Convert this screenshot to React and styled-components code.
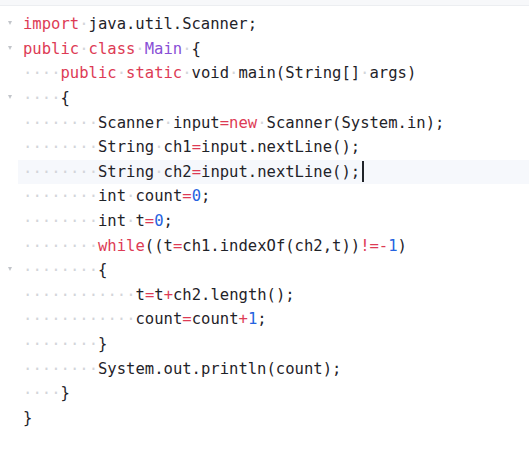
import React from "react";
import styled, { createGlobalStyle } from "styled-components";

const Global = createGlobalStyle`
  html, body { margin: 0; padding: 0; background: #ffffff; }
  body { font-family: "DejaVu Sans Mono", "Liberation Mono", monospace; }
`;

const Page = styled.div`
  width: 529px;
  height: 452px;
  background: #ffffff;
  display: flex;
  flex-direction: column;
  overflow: hidden;
`;

const TopStrip = styled.div`
  height: 5px;
  background: #f7f8fa;
  border-bottom: 1px solid #eceef1;
  flex: none;
`;

const Code = styled.div`
  padding-top: 6px;
  display: flex;
  flex-direction: column;
`;

const Row = styled.div`
  display: flex;
  height: 24.6px;
  align-items: center;
`;

const Gutter = styled.div`
  width: 18px;
  flex: none;
  height: 100%;
  display: flex;
  align-items: center;
  padding-left: 8px;
  box-sizing: border-box;
`;

const Fold = styled.span`
  width: 0;
  height: 0;
  border-left: 2.5px solid transparent;
  border-right: 2.5px solid transparent;
  border-top: 4px solid #c2c5ca;
  margin-top: -2px;
`;

const Content = styled.div`
  flex: 1;
  height: 100%;
  display: flex;
  align-items: center;
  padding-left: 5px;
  background: ${(p) => (p.$active ? "#f6f8fc" : "transparent")};
  font-size: 15.55px;
  white-space: pre;
  color: #1f2329;
  letter-spacing: 0;
`;

const colors = {
  p: "#1f2329",
  k: "#dd3b55",
  c: "#8850d6",
  n: "#2563e0",
};

const Tok = styled.span`
  color: ${(p) => colors[p.$kind]};
`;

const Ws = styled.span`
  color: #d3d5da;
`;

const Caret = styled.span`
  display: inline-block;
  width: 1.5px;
  height: 21px;
  background: #1f2329;
  margin-left: 2px;
`;

const lines = [
  { fold: true, t: [["k", "import"], ["p", " java.util.Scanner;"]] },
  { fold: true, t: [["k", "public"], ["p", " "], ["k", "class"], ["p", " "], ["c", "Main"], ["p", " {"]] },
  { t: [["p", "    "], ["k", "public"], ["p", " "], ["k", "static"], ["p", " void main(String[] args)"]] },
  { fold: true, t: [["p", "    {"]] },
  { t: [["p", "        Scanner input"], ["k", "=new"], ["p", " Scanner(System.in);"]] },
  { t: [["p", "        String ch1"], ["k", "="], ["p", "input.nextLine();"]] },
  { active: true, t: [["p", "        String ch2"], ["k", "="], ["p", "input.nextLine();"]] },
  { t: [["p", "        int count"], ["k", "="], ["n", "0"], ["p", ";"]] },
  { t: [["p", "        int t"], ["k", "="], ["n", "0"], ["p", ";"]] },
  { t: [["p", "        "], ["k", "while"], ["p", "((t"], ["k", "="], ["p", "ch1.indexOf(ch2,t))"], ["k", "!=-"], ["n", "1"], ["p", ")"]] },
  { fold: true, t: [["p", "        {"]] },
  { t: [["p", "            t"], ["k", "="], ["p", "t"], ["k", "+"], ["p", "ch2.length();"]] },
  { t: [["p", "            count"], ["k", "="], ["p", "count"], ["k", "+"], ["n", "1"], ["p", ";"]] },
  { t: [["p", "        }"]] },
  { t: [["p", "        System.out.println(count);"]] },
  { t: [["p", "    }"]] },
  { t: [["p", "}"]] },
];

function renderText(text, key) {
  const parts = text.split(/( )/);
  return parts.map((part, i) =>
    part === " " ? <Ws key={key + "-" + i}>·</Ws> : part ? <React.Fragment key={key + "-" + i}>{part}</React.Fragment> : null
  );
}

export default function App() {
  return (
    <Page>
      <Global />
      <TopStrip />
      <Code>
        {lines.map((line, li) => (
          <Row key={li}>
            <Gutter>{line.fold && <Fold />}</Gutter>
            <Content $active={line.active}>
              {line.t.map(([kind, text], ti) => (
                <Tok key={ti} $kind={kind}>
                  {renderText(text, li + "-" + ti)}
                </Tok>
              ))}
              {line.active && <Caret />}
            </Content>
          </Row>
        ))}
      </Code>
    </Page>
  );
}
